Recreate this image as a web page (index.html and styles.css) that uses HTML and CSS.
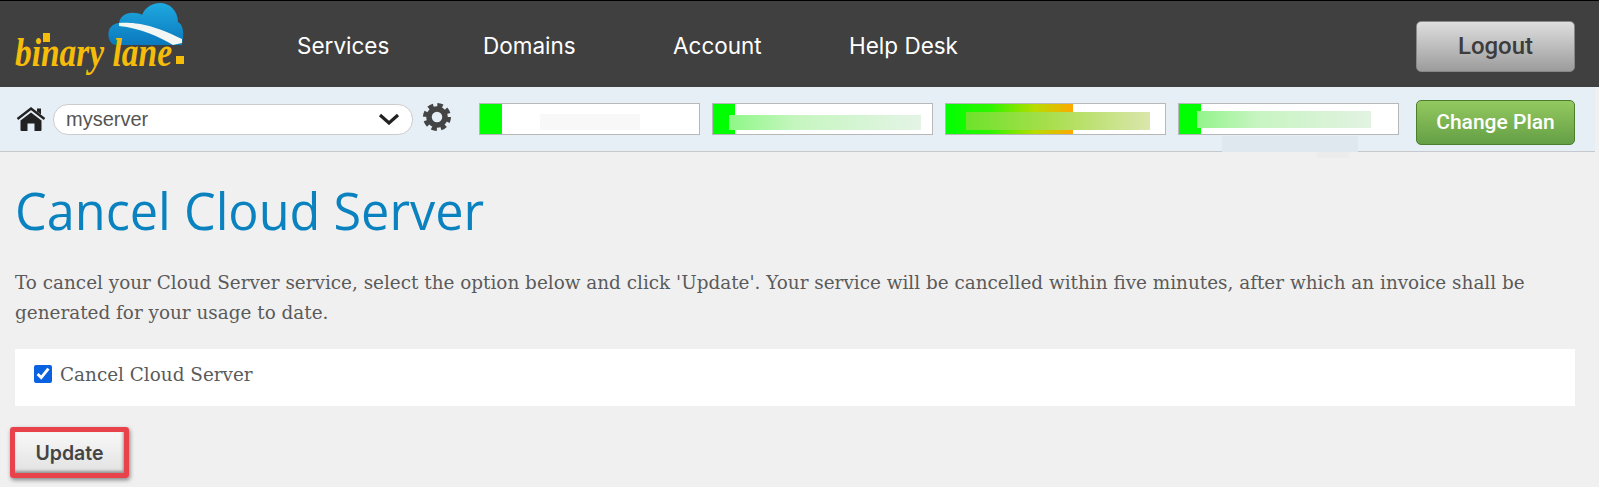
FILE: index.html
```html
<!DOCTYPE html>
<html lang="en">
<head>
  <meta charset="UTF-8" />
  <title>Cancel Cloud Server</title>
  <link rel="stylesheet" href="styles.css">
</head>
<body>
  <div class="header">
    <svg class="logo" width="200" height="84" viewBox="0 0 200 84">
      <defs>
        <linearGradient id="cloudFill" x1="0" y1="0" x2="0" y2="1">
          <stop offset="0" stop-color="#1fa9e0"/>
          <stop offset="1" stop-color="#0a78bd"/>
        </linearGradient>
      </defs>
      <path d="M100 43 C93 41 92 31 95 26 C98 22 102 21 104 21 C105 14 112 10 120 11 C124 11 126 12 127 13 C130 5 138 1 145 1 C155 1 163 9 163 20 C167 22 169 28 168 36 L167 43 Z" fill="url(#cloudFill)"/>
      <path d="M104 21 C116 20 135 21 167 37 L167 41 L158 43 C145 35 125 26 104 24 Z" fill="#f4f6f4"/>
      <text x="0" y="64" class="logo-text" textLength="157" lengthAdjust="spacingAndGlyphs">binary lane</text>
      <rect x="28" y="31" width="7" height="9" fill="#f5bd0a"/>
      <rect x="161" y="54" width="8" height="8" fill="#f5bd0a"/>
    </svg>
    <div class="nav">
      <a href="#">Services</a>
      <a href="#">Domains</a>
      <a href="#">Account</a>
      <a href="#">Help Desk</a>
    </div>
    <button class="logout-btn">Logout</button>
  </div>

  <div class="subbar">
    <svg class="home-icon" width="30" height="26" viewBox="0 0 30 26">
      <path d="M1.5 13 L15 2.5 L28.5 13" fill="none" stroke="#222" stroke-width="2.4"/>
      <path d="M21 2.5 h4 v6 l-4 -3 Z" fill="#222"/>
      <path d="M4.5 14.5 L15 6.5 L25.5 14.5 V24 Q25.5 25 24.5 25 H18.5 V17.5 H11.5 V25 H5.5 Q4.5 25 4.5 24 Z" fill="#222"/>
    </svg>
    <div class="server-select">
      <span>myserver</span>
      <svg width="22" height="12" viewBox="0 0 22 12">
        <path d="M2 2 L11 10 L20 2" fill="none" stroke="#222" stroke-width="3.2"/>
      </svg>
    </div>
    <svg class="gear-icon" width="28" height="28" viewBox="0 0 28 28">
      <circle cx="14" cy="14" r="8" fill="none" stroke="#444" stroke-width="5.5"/>
      <circle cx="14" cy="14" r="12" fill="none" stroke="#444" stroke-width="4" stroke-dasharray="5.4 4.02"/>
    </svg>
    <div class="bars">
      <div class="bar">
        <div class="bar-fill" style="width: 22px"></div>
        <div class="smudge smudge-one"></div>
      </div>
      <div class="bar">
        <div class="bar-fill" style="width: 22px"></div>
        <div class="smudge smudge-two"></div>
      </div>
      <div class="bar">
        <div class="bar-fill bar-fill-warm" style="width: 127px"></div>
        <div class="smudge smudge-three"></div>
      </div>
      <div class="bar">
        <div class="bar-fill" style="width: 22px"></div>
        <div class="smudge smudge-four"></div>
      </div>
    </div>
    <button class="plan-btn">Change Plan</button>
    <div class="smudge smudge-under"></div>
    <div class="smudge smudge-under-low"></div>
  </div>

  <div class="content">
    <h1>Cancel Cloud Server</h1>
    <p>To cancel your Cloud Server service, select the option below and click 'Update'. Your service will be cancelled within five minutes, after which an invoice shall be generated for your usage to date.</p>
    <label class="option">
      <input type="checkbox" checked>
      <span>Cancel Cloud Server</span>
    </label>
    <div class="update-mark">
      <button class="update-btn">Update</button>
    </div>
  </div>
</body>
</html>
```

FILE: styles.css
```css
html, body {
  margin: 0;
  padding: 0;
}

body {
  width: 1599px;
  height: 487px;
  overflow: hidden;
  background-color: #f0f0f0;
  color: #5a5a5a;
  font-family: "DejaVu Serif", serif;
}

.header {
  display: flex;
  align-items: center;
  height: 86px;
  border-top: 1px solid #000;
  background-color: #404040;
}

.logo {
  flex: none;
  margin: 0 0 0 15px;
}

.logo-text {
  font-family: "Liberation Serif", serif;
  font-style: italic;
  font-weight: bold;
  font-size: 41px;
  fill: #f5bd0a;
}

.nav {
  display: grid;
  grid-template-columns: 186px 190px 176px auto;
  margin: 3px 0 0 82px;
}

.nav a {
  color: #fff;
  font-family: "Inter", sans-serif;
  font-size: 22.5px;
  text-decoration: none;
}

.logout-btn {
  width: 159px;
  height: 51px;
  margin: 4px 24px 0 auto;
  border: 1px solid #888;
  border-radius: 5px;
  background: linear-gradient(#dedede, #9c9c9c);
  color: #3c3c3c;
  font-family: "Roboto", sans-serif;
  font-size: 24px;
  font-weight: 500;
}

.subbar {
  position: relative;
  display: flex;
  align-items: center;
  width: 1595px;
  height: 64px;
  border-bottom: 1px solid #c6c9cc;
  background-color: #e6eef6;
}

.home-icon {
  flex: none;
  margin: 0 0 0 16px;
}

.server-select {
  display: flex;
  align-items: center;
  justify-content: space-between;
  box-sizing: border-box;
  width: 360px;
  height: 31px;
  margin-left: 7px;
  padding: 0 12px;
  border: 1px solid #ccc;
  border-radius: 15px;
  background-color: #fff;
  color: #555;
  font-family: "Liberation Sans", sans-serif;
  font-size: 20px;
}

.gear-icon {
  flex: none;
  margin: 0 0 4px 10px;
}

.bars {
  display: flex;
  gap: 12px;
  margin-left: 28px;
}

.bar {
  position: relative;
  box-sizing: border-box;
  width: 221px;
  height: 32px;
  border: 1px solid #b8b8b8;
  background-color: #fff;
}

.bar-fill {
  height: 100%;
  background-color: #0f0;
}

.bar-fill-warm {
  background: linear-gradient(90deg, #0f0 0%, #2ef500 35%, #b8dc00 70%, #ffa800 100%);
}

.smudge {
  position: absolute;
}

.smudge-one {
  left: 60px;
  top: 10px;
  width: 100px;
  height: 16px;
  background-color: #f8f8f8;
}

.smudge-two {
  left: 16px;
  top: 11px;
  width: 192px;
  height: 15px;
  background: linear-gradient(90deg, #8ef786, #c6f6c0 35%, #e4f4e6);
}

.smudge-three {
  left: 20px;
  top: 8px;
  width: 184px;
  height: 18px;
  background: linear-gradient(90deg, #6ee22c, #a8de4c 45%, #dbe6ac);
}

.smudge-four {
  left: 18px;
  top: 7px;
  width: 174px;
  height: 17px;
  background: linear-gradient(90deg, #92f48a, #c8f4c2 35%, #e2f3e2);
}

.smudge-under {
  left: 1222px;
  top: 49px;
  width: 136px;
  height: 16px;
  background-color: #dfe7ef;
}

.smudge-under-low {
  left: 1317px;
  top: 65px;
  width: 32px;
  height: 6px;
  background-color: #ececec;
}

.plan-btn {
  box-sizing: border-box;
  width: 159px;
  height: 45px;
  margin: 6px 0 0 17px;
  border: 1px solid #4a7f2e;
  border-radius: 5px;
  background: linear-gradient(#93c95f, #659f46);
  color: #fff;
  font-family: "Roboto", sans-serif;
  font-size: 21px;
  font-weight: 500;
}

.content {
  padding: 0 24px 0 15px;
}

h1 {
  margin: 25px 0 0;
  color: #0a82bf;
  font-family: "Open Sans", sans-serif;
  font-size: 50.4px;
  font-weight: 500;
  line-height: 68px;
}

p {
  margin: 23px 0 0;
  font-size: 18.4px;
  line-height: 30px;
}

.option {
  display: flex;
  align-items: center;
  box-sizing: border-box;
  height: 57px;
  margin-top: 21px;
  padding: 0 0 7px 19px;
  background-color: #fff;
  font-size: 18.4px;
}

.option input {
  width: 18px;
  height: 18px;
  margin: 0 8px 0 0;
  accent-color: #0a62e0;
}

.update-mark {
  width: 109px;
  margin: 21px 0 0 -5px;
  border: 5px solid #e8434a;
  border-radius: 3px;
  box-shadow: 1px 2px 4px rgba(0, 0, 0, 0.45);
}

.update-btn {
  display: block;
  width: 100%;
  height: 41px;
  border: none;
  background: linear-gradient(#f8f8f8, #e2e2e2);
  box-shadow: inset -1px -2px 3px rgba(0, 0, 0, 0.35);
  color: #444;
  font-family: "Inter", sans-serif;
  font-size: 19.5px;
  font-weight: 600;
}
```
